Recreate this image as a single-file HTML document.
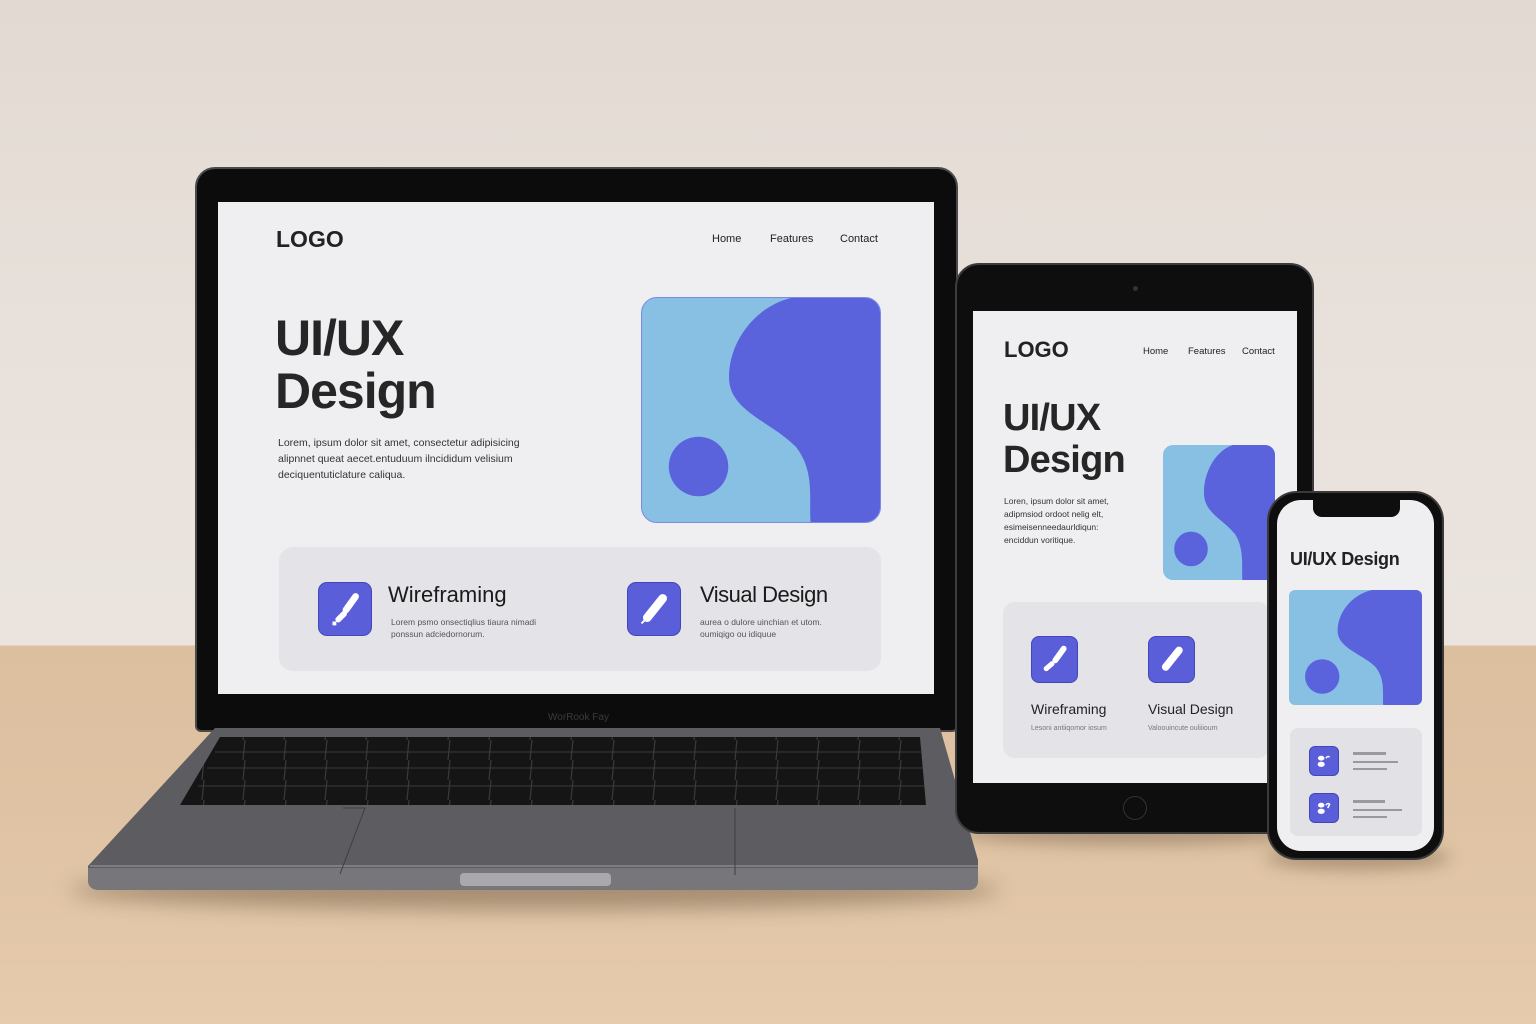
<!DOCTYPE html>
<html><head><meta charset="utf-8"><style>
*{margin:0;padding:0;box-sizing:border-box}
body{width:1536px;height:1024px;overflow:hidden;position:relative;font-family:"Liberation Sans",sans-serif;color:#222;
background:linear-gradient(#e2d9d2 0,#e9e2dc 400px,#ebe4de 645px,#dcbf9f 646px,#dec2a3 800px,#e6cbac 1024px)}
.a{position:absolute}
.scr{background:#efeff1}
.blob{position:absolute;overflow:hidden;background:#88c0e4}
.blob svg{position:absolute;left:0;top:0;width:100%;height:100%}
.ic{position:absolute;background:#5a5fd9;border:1px solid #4346b8}
.ic svg{width:100%;height:100%;display:block}
</style></head><body>
<!-- shadows -->
<div class="a" style="left:70px;top:870px;width:930px;height:40px;border-radius:50%;background:rgba(60,40,20,.35);filter:blur(10px)"></div>
<div class="a" style="left:960px;top:820px;width:340px;height:25px;border-radius:50%;background:rgba(60,40,20,.3);filter:blur(8px)"></div>
<div class="a" style="left:1265px;top:845px;width:185px;height:25px;border-radius:50%;background:rgba(60,40,20,.3);filter:blur(8px)"></div>

<!-- laptop lid -->
<div class="a" style="left:195px;top:167px;width:763px;height:565px;border-radius:20px 20px 6px 6px;background:#0c0c0c;border:2px solid #4a4a4c"></div>
<div class="a scr" style="left:218px;top:202px;width:716px;height:492px">
  <div class="a" style="left:58px;top:24px;font-size:23px;font-weight:bold;color:#222">LOGO</div>
  <div class="a" style="left:494px;top:31px;font-size:11px">Home</div>
  <div class="a" style="left:552px;top:31px;font-size:11px">Features</div>
  <div class="a" style="left:622px;top:31px;font-size:11px">Contact</div>
  <div class="a" style="left:57px;top:110px;font-size:50px;font-weight:bold;line-height:53px;color:#262626;letter-spacing:-1px">UI/UX<br>Design</div>
  <div class="a" style="left:60px;top:233px;font-size:10.5px;line-height:16px;color:#333">Lorem, ipsum dolor sit amet, consectetur adipisicing<br>alipnnet queat aecet.entuduum ilncididum velisium<br>deciquentuticlature caliqua.</div>
  <div class="blob" style="left:423px;top:95px;width:240px;height:226px;border-radius:16px;border:1px solid #7a8ae0">
    <svg viewBox="0 0 240 226" preserveAspectRatio="none"><path d="M150,0 C110,10 85,50 88,85 C92,115 130,125 155,150 C175,175 168,205 170,226 L240,226 L240,0 Z" fill="#5a62dc"/><circle cx="57" cy="170" r="30" fill="#5a62dc"/></svg>
  </div>
  <div class="a" style="left:61px;top:345px;width:602px;height:124px;border-radius:14px;background:#e4e4e8"></div>
  <div class="ic" style="left:100px;top:380px;width:54px;height:54px;border-radius:9px"><svg viewBox="0 0 54 54"><path d="M38 14 L28 28" stroke="#fff" stroke-width="7" stroke-linecap="round"/><path d="M26 32 L20 38" stroke="#fff" stroke-width="6" stroke-linecap="round"/><rect x="14" y="40" width="4" height="4" fill="#fff"/></svg></div>
  <div class="a" style="left:170px;top:380px;font-size:22px;color:#1a1a1a">Wireframing</div>
  <div class="a" style="left:173px;top:414px;font-size:8.5px;line-height:12px;color:#555">Lorem psmo onsectiqlius tiaura nimadi<br>ponssun adciedornorum.</div>
  <div class="ic" style="left:409px;top:380px;width:54px;height:54px;border-radius:9px"><svg viewBox="0 0 54 54"><path d="M36 16 L20 36" stroke="#fff" stroke-width="9" stroke-linecap="round"/><path d="M18 38 L14 42" stroke="#fff" stroke-width="2"/></svg></div>
  <div class="a" style="left:482px;top:380px;font-size:22px;color:#1a1a1a;letter-spacing:-.5px">Visual Design</div>
  <div class="a" style="left:482px;top:414px;font-size:8.5px;line-height:12px;color:#555">aurea o dulore uinchian et utom.<br>oumiqigo ou idiquue</div>
</div>
<div class="a" style="left:548px;top:712px;font-size:10px;color:#3a3a3a">WorRook Fay</div>

<!-- laptop base -->
<svg class="a" style="left:0;top:0" width="1536" height="1024">
  <defs><pattern id="k" x="0" y="0" width="41" height="20" patternUnits="userSpaceOnUse"><line x1="40" y1="0" x2="38" y2="20" stroke="#3a3a3c" stroke-width="1.2"/></pattern></defs>
  <path d="M215 728 L940 728 L978 860 L978 880 Q978 890 968 890 L100 890 Q88 890 88 880 L88 866 Z" fill="#5d5d61"/>
  <path d="M88 868 L978 868 L978 880 Q978 890 968 890 L100 890 Q88 890 88 880 Z" fill="#77777b"/>
  <path d="M90 866 L978 866" stroke="#8a8a8e" stroke-width="1.5"/>
  <path d="M220 737 L920 737 L926 805 L180 805 Z" fill="#151516"/>
  <path d="M220 737 L920 737 L926 805 L180 805 Z" fill="url(#k)"/>
  <g stroke="#3a3a3c" stroke-width="1">
    <path d="M215 752 L922 752 M207 768 L923 768 M198 786 L924 786"/>
  </g>
  <path d="M343 808 L365 808 L340 874" stroke="#3e3e41" stroke-width="1" fill="none"/>
  <path d="M735 808 L735 875" stroke="#3e3e41" stroke-width="1"/>
  <rect x="460" y="873" width="151" height="13" rx="4" fill="#a9a9ad"/>
</svg>

<!-- tablet -->
<div class="a" style="left:955px;top:263px;width:359px;height:571px;border-radius:24px;background:#0e0e0e;border:2px solid #3c3c3e"></div>
<div class="a" style="left:1133px;top:286px;width:5px;height:5px;border-radius:50%;background:#333"></div>
<div class="a" style="left:1123px;top:796px;width:24px;height:24px;border-radius:50%;border:1.5px solid #333"></div>
<div class="a scr" style="left:973px;top:311px;width:324px;height:472px">
  <div class="a" style="left:31px;top:26px;font-size:22px;font-weight:bold">LOGO</div>
  <div class="a" style="left:170px;top:35px;font-size:9.5px">Home</div>
  <div class="a" style="left:215px;top:35px;font-size:9.5px">Features</div>
  <div class="a" style="left:269px;top:35px;font-size:9.5px">Contact</div>
  <div class="a" style="left:30px;top:86px;font-size:38px;font-weight:bold;line-height:42px;color:#262626;letter-spacing:-.8px">UI/UX<br>Design</div>
  <div class="a" style="left:31px;top:184px;font-size:8.5px;line-height:13px;color:#333">Loren, ipsum dolor sit amet,<br>adipmsiod ordoot nelig elt,<br>esimeisenneedaurldiqun:<br>enciddun voritique.</div>
  <div class="blob" style="left:190px;top:134px;width:112px;height:135px;border-radius:10px">
    <svg viewBox="0 0 240 226" preserveAspectRatio="none"><path d="M150,0 C110,10 85,50 88,85 C92,115 130,125 155,150 C175,175 168,205 170,226 L240,226 L240,0 Z" fill="#5a62dc"/><ellipse cx="60" cy="174" rx="36" ry="29" fill="#5a62dc"/></svg>
  </div>
  <div class="a" style="left:30px;top:291px;width:267px;height:156px;border-radius:12px;background:#e4e4e8"></div>
  <div class="ic" style="left:58px;top:325px;width:47px;height:47px;border-radius:8px"><svg viewBox="0 0 54 54"><path d="M38 14 L28 28" stroke="#fff" stroke-width="7" stroke-linecap="round"/><path d="M24 32 L17 38" stroke="#fff" stroke-width="6" stroke-linecap="round"/></svg></div>
  <div class="ic" style="left:175px;top:325px;width:47px;height:47px;border-radius:8px"><svg viewBox="0 0 54 54"><path d="M36 16 L20 36" stroke="#fff" stroke-width="9" stroke-linecap="round"/></svg></div>
  <div class="a" style="left:58px;top:390px;font-size:14px">Wireframing</div>
  <div class="a" style="left:175px;top:390px;font-size:14px">Visual Design</div>
  <div class="a" style="left:58px;top:414px;font-size:7px;color:#777">Lesoni antiiqomor iosum</div>
  <div class="a" style="left:175px;top:414px;font-size:7px;color:#777">Valoouincute ouliiioum</div>
</div>

<!-- phone -->
<div class="a" style="left:1267px;top:491px;width:177px;height:369px;border-radius:30px;background:#0e0e0e;border:2px solid #3a3a3a"></div>
<div class="a scr" style="left:1277px;top:500px;width:157px;height:351px;border-radius:24px;overflow:hidden">
  <div class="a" style="left:36px;top:0;width:87px;height:17px;border-radius:0 0 9px 9px;background:#0e0e0e"></div>
  <div class="a" style="left:13px;top:49px;font-size:18px;font-weight:bold;letter-spacing:-.3px">UI/UX Design</div>
  <div class="blob" style="left:12px;top:90px;width:133px;height:115px;border-radius:6px">
    <svg viewBox="0 0 240 226" preserveAspectRatio="none"><path d="M150,0 C110,10 85,50 88,85 C92,115 130,125 155,150 C175,175 168,205 170,226 L240,226 L240,0 Z" fill="#5a62dc"/><ellipse cx="60" cy="170" rx="31" ry="34" fill="#5a62dc"/></svg>
  </div>
  <div class="a" style="left:13px;top:228px;width:132px;height:108px;border-radius:8px;background:#e2e2e6"></div>
  <div class="ic" style="left:32px;top:246px;width:30px;height:30px;border-radius:6px"><svg viewBox="0 0 30 30"><ellipse cx="12" cy="12" rx="3.5" ry="2.6" fill="#fff"/><ellipse cx="12" cy="18.5" rx="3.8" ry="2.8" fill="#fff"/><path d="M17 12 Q19 9 21 11" stroke="#fff" stroke-width="1.6" fill="none"/></svg></div>
  <div class="ic" style="left:32px;top:293px;width:30px;height:30px;border-radius:6px"><svg viewBox="0 0 30 30"><ellipse cx="12" cy="12" rx="3.5" ry="2.6" fill="#fff"/><ellipse cx="12" cy="18.5" rx="3.8" ry="2.8" fill="#fff"/><path d="M17 12 Q19 9 21 11 L19 15" stroke="#fff" stroke-width="1.6" fill="none"/></svg></div>
  <div class="a" style="left:76px;top:252px;width:33px;height:3px;background:#9a9a9e"></div>
  <div class="a" style="left:76px;top:261px;width:45px;height:2px;background:#9a9a9e"></div>
  <div class="a" style="left:76px;top:268px;width:34px;height:2px;background:#9a9a9e"></div>
  <div class="a" style="left:76px;top:300px;width:32px;height:3px;background:#9a9a9e"></div>
  <div class="a" style="left:76px;top:309px;width:49px;height:2px;background:#9a9a9e"></div>
  <div class="a" style="left:76px;top:316px;width:34px;height:2px;background:#9a9a9e"></div>
</div>
</body></html>
